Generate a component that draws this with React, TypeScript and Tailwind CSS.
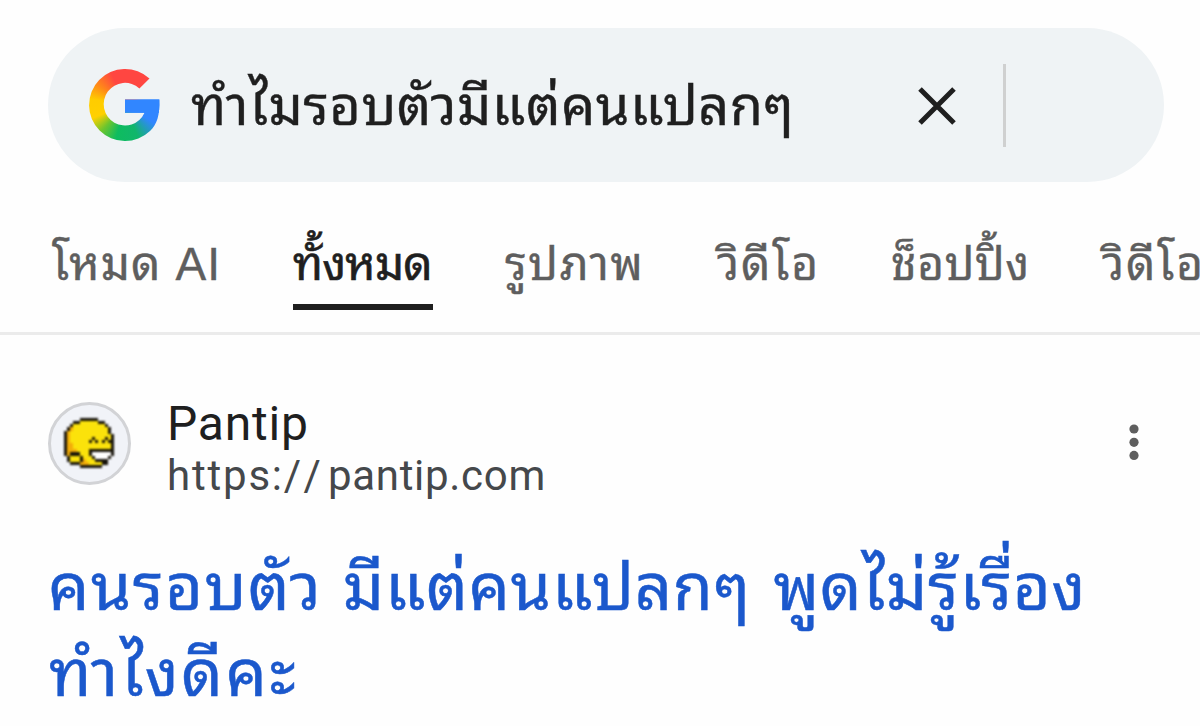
const tabs = [
  { label: 'โหมด AI', box: 'ml-[52px] w-[168px] tracking-[1.1px]' },
  { label: 'ทั้งหมด', box: 'ml-[73px] w-[140px] tracking-[-0.8px]', active: true },
  { label: 'รูปภาพ', box: 'ml-[72px] w-[138px] tracking-[1.6px]' },
  { label: 'วิดีโอ', box: 'ml-[74px] w-[104px] tracking-[1.9px]' },
  { label: 'ช็อปปิ้ง', box: 'ml-[70px] w-[138px] tracking-[0.6px]' },
  { label: 'วิดีโอ', box: 'ml-[73px] w-[104px] tracking-[1.9px]' },
];

// One character per pixel of the 16x16 favicon
const smiley = [
  '.....kkkkkk.....',
  '...kkyyyyyykk...',
  '..kyyyyyyyyyyk..',
  '.koyyyyyyyyyyyk.',
  'koyyyyyyyyyyyyk.',
  'koyyyyyyyyyyyyyk',
  'koyyyyyyykyyykyk',
  'koyyyyyykykykykk',
  'kooyyyyyyyyyyyyk',
  'kooyyyyyyyyyyyyk',
  'koooyyyykkkkkkkk',
  'kokkkyyykwwwwwwk',
  '.kyyykyyykwwwwk.',
  '.kyyykoyyykkkk..',
  '..kkkoooyyyykk..',
  '.....kkkkkkk....',
];

const colors: Record<string, string> = {
  k: '#17130a',
  y: '#fbe20b',
  o: '#f3ad08',
  w: '#ffffff',
};

function GoogleLogo() {
  return (
    <div className="w-[72px] h-[72px] shrink-0 pt-[30px] pl-9 bg-[conic-gradient(from_0deg_at_50%_50%,#ff4641_0deg,#ff4641_60deg,#3186ff_75deg,#3186ff_122deg,#11b66b_158deg,#0ebc5f_195deg,#6cc52e_222deg,#ffd000_248deg,#ffcc00_280deg,#ff8a18_306deg,#ff4641_337deg)] [clip-path:path('M60.5_9.6A36_36_0_1_0_61_62C68_55.5_71_46_70.3_30.5H36V43.7H55.5A21.3_21.3_0_1_1_50.4_19.5Z')]">
      <div className="h-[14px] bg-[#3186ff]" />
    </div>
  );
}

function Favicon() {
  return (
    <div className="w-[83px] h-[83px] shrink-0 rounded-full border-[3px] border-[#d2d3d6] bg-[#f1f3f8] flex items-center justify-center">
      <svg width="50" height="50" viewBox="0 0 16 16" className="mr-0.5 mb-0.5 blur-[0.8px]" shapeRendering="crispEdges">
        {smiley.map((row, y) =>
          row.split('').map((c, x) =>
            c === '.' ? null : <rect key={`${x}-${y}`} x={x} y={y} width="1" height="1" fill={colors[c]} />
          )
        )}
      </svg>
    </div>
  );
}

export default function App() {
  return (
    <div className="w-[1200px] h-[726px] overflow-hidden bg-[#fefefe] font-['Liberation_Sans','Noto_Sans_Thai_Looped','Noto_Sans_Thai',sans-serif]">
      {/* Search bar */}
      <div className="pt-7 pl-12">
        <div className="w-[1116px] h-[154px] rounded-full bg-[#eff3f5] flex items-center pl-[41px]">
          <GoogleLogo />
          <div className="ml-[30px] w-[727px] pt-px text-[54px] leading-[80px] tracking-[0.5px] whitespace-nowrap text-[#1f1f1f] [-webkit-text-stroke:0.4px_#1f1f1f]">
            ทำไมรอบตัวมีแต่คนแปลกๆ
          </div>
          <svg width="38" height="38" viewBox="0 0 38 38" className="shrink-0 mt-0.5">
            <path d="M2 2L36 36M36 2L2 36" stroke="#1f1f1f" strokeWidth="5" />
          </svg>
          <div className="ml-[47px] w-[3px] h-[83px] bg-[#cfd0d0]" />
        </div>
      </div>

      {/* Tabs */}
      <nav className="h-[153px] flex border-b-[3px] border-[#ebebeb] overflow-hidden">
        {tabs.map((tab, i) => (
          <div key={i} className={`${tab.box} shrink-0 h-[128px] pt-[46px] ${tab.active ? 'border-b-[6px] border-[#1f1f1f] text-[#1f1f1f] [-webkit-text-stroke:0.6px_#1f1f1f]' : 'text-[#5e5e5e] [-webkit-text-stroke:0.4px_#5e5e5e]'}`}>
            <div className="text-[46px] leading-[72px] whitespace-nowrap">{tab.label}</div>
          </div>
        ))}
      </nav>

      {/* Result */}
      <div className="pt-[67px] pl-12 flex">
        <Favicon />
        <div className="ml-[36px] w-[961px] font-['Roboto','Liberation_Sans',sans-serif]">
          <div className="text-[48px] leading-[44px] tracking-[0.8px] text-[#1f1f1f]">Pantip</div>
          <div className="mt-2 text-[42px] leading-[44px] tracking-[0.7px] text-[#45484b]">
            <span className="tracking-[1.8px]">https:</span>
            <span className="tracking-[7px]">//</span>pantip.com
          </div>
        </div>
        <svg width="12" height="36" viewBox="0 0 12 36" className="mt-[22px]" fill="#5e5e5e">
          <circle cx="6" cy="5" r="4.6" />
          <circle cx="6" cy="18.3" r="4.6" />
          <circle cx="6" cy="31.4" r="4.6" />
        </svg>
      </div>
      <h3 className="mt-[47px] pl-12 text-[65px] leading-[86px] whitespace-nowrap text-[#1b58cc] [-webkit-text-stroke:0.5px_#1b58cc]">
        <div className="tracking-[0.8px] [word-spacing:4px]">
          <span className="tracking-[1.5px] [word-spacing:1px]">คนรอบตัว </span>มีแต่คนแปลกๆ พูดไม่รู้เรื่อง
        </div>
        <div className="pl-px tracking-[2.7px]">ทำไงดีคะ</div>
      </h3>
    </div>
  );
}
